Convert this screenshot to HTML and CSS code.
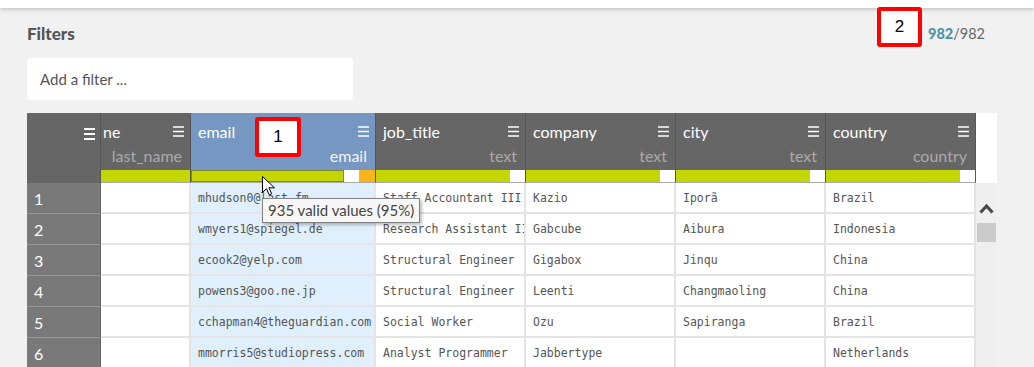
FILE: index.html
```html
<!DOCTYPE html>
<html>
  <head>
    <meta name="viewport" content="width=device-width,initial-scale=1.0">
    <title>Dataset filters</title>
    <link rel="stylesheet" href="styles.css">
  </head>
  <body>
    <div class="topbar"></div>

    <div class="page">
      <div class="filters-head">
        <h2>Filters</h2>
        <span class="count"><b>982</b>/982</span>
      </div>
      <div class="filter-box">Add a filter ...</div>

      <div class="grid">
        <!-- header -->
        <div class="corner">
          <svg class="menu thick" width="11" height="12" viewBox="0 0 11 12"><path d="M0 1h11M0 6h11M0 11h11" stroke="#fff" stroke-width="2"/></svg>
        </div>
        <div class="col-head">
          <div class="col-top"><span class="col-name clipped">ne</span><svg class="menu" width="11" height="11" viewBox="0 0 11 11"><path d="M0 1h11M0 5.5h11M0 10h11" stroke="#fff" stroke-width="1.3"/></svg></div>
          <div class="col-type">last_name</div>
        </div>
        <div class="col-head selected">
          <div class="col-top"><span class="col-name">email</span><svg class="menu" width="11" height="11" viewBox="0 0 11 11"><path d="M0 1h11M0 5.5h11M0 10h11" stroke="#fff" stroke-width="1.3"/></svg></div>
          <div class="col-type">email</div>
        </div>
        <div class="col-head">
          <div class="col-top"><span class="col-name">job_title</span><svg class="menu" width="11" height="11" viewBox="0 0 11 11"><path d="M0 1h11M0 5.5h11M0 10h11" stroke="#fff" stroke-width="1.3"/></svg></div>
          <div class="col-type">text</div>
        </div>
        <div class="col-head">
          <div class="col-top"><span class="col-name">company</span><svg class="menu" width="11" height="11" viewBox="0 0 11 11"><path d="M0 1h11M0 5.5h11M0 10h11" stroke="#fff" stroke-width="1.3"/></svg></div>
          <div class="col-type">text</div>
        </div>
        <div class="col-head">
          <div class="col-top"><span class="col-name">city</span><svg class="menu" width="11" height="11" viewBox="0 0 11 11"><path d="M0 1h11M0 5.5h11M0 10h11" stroke="#fff" stroke-width="1.3"/></svg></div>
          <div class="col-type">text</div>
        </div>
        <div class="col-head">
          <div class="col-top"><span class="col-name">country</span><svg class="menu" width="11" height="11" viewBox="0 0 11 11"><path d="M0 1h11M0 5.5h11M0 10h11" stroke="#fff" stroke-width="1.3"/></svg></div>
          <div class="col-type">country</div>
        </div>
        <div class="scroll-head"></div>

        <!-- quality bars -->
        <div class="bar"><span class="valid" style="width: 89px"></span></div>
        <div class="bar"><span class="valid outlined" style="width: 153px"></span><span class="empty"></span><span class="invalid"></span></div>
        <div class="bar"><span class="valid" style="width: 134px"></span></div>
        <div class="bar"><span class="valid" style="width: 134px"></span></div>
        <div class="bar"><span class="valid" style="width: 134px"></span></div>
        <div class="bar"><span class="valid" style="width: 134px"></span></div>

        <div class="scrollbar">
          <svg width="15" height="11" viewBox="0 0 15 11"><path d="M1.5 9.5L7.5 3l6 6.5" fill="none" stroke="#4a4a4a" stroke-width="3.2"/></svg>
          <span class="thumb"></span>
        </div>

        <!-- rows -->
        <div class="rownum">1</div><div class="cell"></div><div class="cell email">mhudson0@last.fm</div><div class="cell">Staff Accountant III</div><div class="cell">Kazio</div><div class="cell">Iporã</div><div class="cell">Brazil</div>
        <div class="rownum">2</div><div class="cell"></div><div class="cell email">wmyers1@spiegel.de</div><div class="cell">Research Assistant II</div><div class="cell">Gabcube</div><div class="cell">Aibura</div><div class="cell">Indonesia</div>
        <div class="rownum">3</div><div class="cell"></div><div class="cell email">ecook2@yelp.com</div><div class="cell">Structural Engineer</div><div class="cell">Gigabox</div><div class="cell">Jinqu</div><div class="cell">China</div>
        <div class="rownum">4</div><div class="cell"></div><div class="cell email">powens3@goo.ne.jp</div><div class="cell">Structural Engineer</div><div class="cell">Leenti</div><div class="cell">Changmaoling</div><div class="cell">China</div>
        <div class="rownum">5</div><div class="cell"></div><div class="cell email">cchapman4@theguardian.com</div><div class="cell">Social Worker</div><div class="cell">Ozu</div><div class="cell">Sapiranga</div><div class="cell">Brazil</div>
        <div class="rownum">6</div><div class="cell"></div><div class="cell email">mmorris5@studiopress.com</div><div class="cell">Analyst Programmer</div><div class="cell">Jabbertype</div><div class="cell"></div><div class="cell">Netherlands</div>

        <div class="tooltip">935 valid values (95%)</div>
        <svg class="cursor" width="13" height="20" viewBox="0 0 13 20"><path d="M0.5 0.5v16l4-3.8 2.8 6.2 2.4-1.1-2.8-6h5.6z" fill="#fff" stroke="#000" stroke-width="1"/></svg>
        <div class="badge badge-1">1</div>
      </div>

      <div class="badge badge-2">2</div>
    </div>
  </body>
</html>
```

FILE: styles.css
```css
body { margin: 0; background: #f1f1f1; font-family: Lato, "Open Sans", sans-serif; color: #555; overflow: hidden; }

.topbar { height: 8px; background: #fff; box-shadow: 0 1px 4px rgba(0,0,0,0.25); position: relative; }

.page { position: relative; padding: 15px 37px 0 27px; }

.filters-head { display: flex; justify-content: space-between; align-items: center; height: 20px; padding-right: 12px; }
.filters-head h2 { margin: 0; font-size: 17px; font-weight: 900; color: #555; }
.count { font-size: 14.5px; color: #666; }
.count b { color: #4f93a8; font-weight: 900; }

.filter-box {
  width: 326px;
  height: 42px;
  margin-top: 15px;
  padding-left: 13px;
  box-sizing: border-box;
  display: flex;
  align-items: center;
  background: #fff;
  border-radius: 4px;
  font-size: 15px;
  color: #555;
}

.grid {
  position: relative;
  margin-top: 13px;
  display: grid;
  grid-template-columns: 74px 90px 185px 150px 150px 150px 150px 21px;
  grid-template-rows: 57px 13px repeat(6, 31px);
}

.corner { grid-column: 1; grid-row: 1 / 3; background: #666; border-right: 1px solid #555; display: flex; justify-content: flex-end; padding: 15px 5px 0 0; }
.menu { flex: none; }

.col-head { background: #666; border-right: 1px solid #555; display: flex; flex-direction: column; justify-content: space-between; padding: 9px 8px 4px 7px; overflow: hidden; }
.col-head.selected { background: #7597c2; }
.col-top { display: flex; justify-content: space-between; align-items: center; height: 20px; margin-right: -2px; }
.col-name { color: #fff; font-size: 16px; line-height: 20px; }
.col-name.clipped { margin-left: -5px; }
.col-top .menu { margin-top: -1px; }
.col-type { text-align: right; color: #aaa; font-size: 16px; line-height: 20px; }
.selected .col-type { color: #f4f4f4; }

.scroll-head { grid-column: 8; grid-row: 1 / 3; background: #fff; }

.bar { display: flex; background: #fff; border-right: 1px solid #555; border-bottom: 1px solid #aaa; }
.bar .valid { background: #c4d600; }
.bar .valid.outlined { box-sizing: border-box; border: 1px solid #7f8a30; }
.bar .empty { width: 15px; background: #fff; }
.bar .invalid { flex: 1; background: #f7b519; }

.scrollbar { grid-column: 8; grid-row: 3 / 9; background: #efefef; display: flex; flex-direction: column; align-items: center; padding-top: 20px; gap: 9px; }
.thumb { width: 19px; height: 19px; background: #cbcbcb; }

.rownum { grid-column: 1; background: #797979; color: #fff; font-size: 16px; padding-left: 7px; display: flex; align-items: center; border-bottom: 1px solid #999; border-right: 1px solid #666; }

.cell {
  background: #fff;
  border-right: 2px solid #e4e4e4;
  border-bottom: 2px solid #e4e4e4;
  padding-left: 7px;
  display: flex;
  align-items: center;
  white-space: nowrap;
  overflow: hidden;
  font-family: "DejaVu Sans Mono", monospace;
  font-size: 11.5px;
  color: #555;
}
.cell.email { background: #dfeffc; }

.tooltip {
  position: absolute;
  left: 235px;
  top: 85px;
  padding: 2px 5px 3px;
  background: #f7f7f7;
  border: 1px solid #808080;
  box-shadow: 2px 2px 3px rgba(0,0,0,0.25);
  font-size: 15px;
  color: #444;
  white-space: nowrap;
}

.cursor { position: absolute; left: 235px; top: 63px; }

.badge {
  position: absolute;
  width: 46px;
  height: 40px;
  box-sizing: border-box;
  border: 4px solid #f00;
  border-radius: 3px;
  background: #fff;
  display: flex;
  align-items: center;
  justify-content: center;
  font-family: "Liberation Sans", Arial, sans-serif;
  font-size: 17px;
  color: #000;
}
.badge-1 { left: 228px; top: 4px; }
.badge-2 { left: 877px; top: -1px; width: 45px; }
```
